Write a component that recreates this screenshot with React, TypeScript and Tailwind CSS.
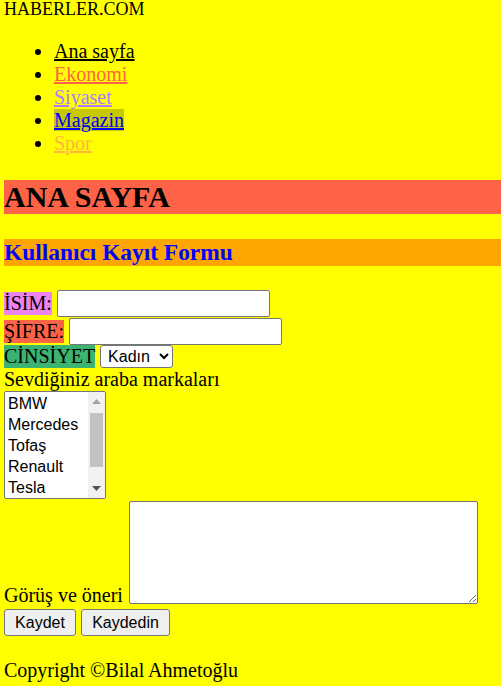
const links = [
  { label: "Ana sayfa", cls: "text-black decoration-black" },
  { label: "Ekonomi", cls: "text-[#ff6347]" },
  { label: "Siyaset", cls: "text-[#a97cff]" },
  { label: "Magazin", cls: "text-[#0000ff] bg-[#c8c800]" },
  { label: "Spor", cls: "text-[#ffb340]" },
];

const cars = ["BMW", "Mercedes", "Tofaş", "Renault", "Tesla"];

const serif = "font-['Liberation_Serif',serif]";
const sans = "font-['Liberation_Sans',Arial,sans-serif]";

export default function App() {
  return (
    <div className={`min-h-[686px] bg-[#ffff00] pl-1 text-black ${serif}`}>
      {/* Header */}
      <div className="text-[18px] leading-[18px]">HABERLER.COM</div>

      {/* Nav */}
      <ul className="mt-[22px] list-disc pl-[50px] text-[20px] leading-[23px]">
        {links.map((l) => (
          <li key={l.label}>
            <a href="#" className={`underline ${l.cls}`}>
              {l.label}
            </a>
          </li>
        ))}
      </ul>

      <h1 className="mt-[25px] bg-[#ff6347] text-[30px] leading-[34px] font-bold">ANA SAYFA</h1>

      <h2 className="mt-[25px] bg-[#ffa500] text-[23.4px] leading-[27px] font-bold text-[#0000ff]">
        Kullanıcı Kayıt Formu
      </h2>

      {/* Form */}
      <form className="mt-[23px] text-[20px] leading-[23px]">
        <div className="flex h-[28px] items-center gap-[5px]">
          <span className="bg-[#ee82ee]">İSİM:</span>
          <input className="h-[27px] w-[213px] rounded-[2px] border border-[#767676] bg-white" />
        </div>
        <div className="flex h-[28px] items-center gap-[5px]">
          <span className="bg-[#ff6347]">ŞİFRE:</span>
          <input type="password" className="h-[27px] w-[213px] rounded-[2px] border border-[#767676] bg-white" />
        </div>
        <div className="flex h-[23px] items-center gap-[5px]">
          <span className="bg-[#3cb371]">CİNSİYET</span>
          <select
            defaultValue="kadin"
            className={`h-[23px] w-[73px] rounded-[3px] border border-[#767676] bg-white px-[3px] text-[16px] leading-[19px] ${sans}`}
          >
            <option value="kadin">Kadın</option>
            <option value="erkek">Erkek</option>
          </select>
        </div>
        <div>Sevdiğiniz araba markaları</div>

        {/* Listbox */}
        <div className={`flex h-[108px] w-[102px] overflow-hidden rounded-[2px] border border-[#767676] bg-white ${sans}`}>
          <div className="flex-1 pl-[3px] pt-[1px] text-[16px] leading-[21px]">
            {cars.map((c) => (
              <div key={c}>{c}</div>
            ))}
          </div>
          <div className="flex w-[17px] flex-col items-center bg-[#f1f1f1] py-[5px]">
            <svg width="9" height="5" viewBox="0 0 9 5" className="mt-[2px]">
              <path d="M0 5 L4.5 0 L9 5 Z" fill="#a3a3a3" />
            </svg>
            <div className="mt-[9px] h-[54px] w-[13px] bg-[#c1c1c1]" />
            <div className="flex-1" />
            <svg width="9" height="5" viewBox="0 0 9 5" className="mb-[2px]">
              <path d="M0 0 L4.5 5 L9 0 Z" fill="#505050" />
            </svg>
          </div>
        </div>

        <div className="mt-[2px] flex items-end gap-[6px]">
          <span className="leading-[18px]">Görüş ve öneri</span>
          <textarea className="h-[103px] w-[349px] rounded-[2px] border border-[#767676] bg-white" />
        </div>

        <div className={`mt-[5px] flex gap-[5px] text-[16px] ${sans}`}>
          <button type="button" className="h-[27px] w-[72px] rounded-[3px] border border-[#767676] bg-[#efefef]">
            Kaydet
          </button>
          <button type="button" className="h-[27px] w-[89px] rounded-[3px] border border-[#767676] bg-[#efefef]">
            Kaydedin
          </button>
        </div>
      </form>

      <p className="mt-[23px] text-[20px] leading-[23px]">Copyright ©Bilal Ahmetoğlu</p>
    </div>
  );
}
